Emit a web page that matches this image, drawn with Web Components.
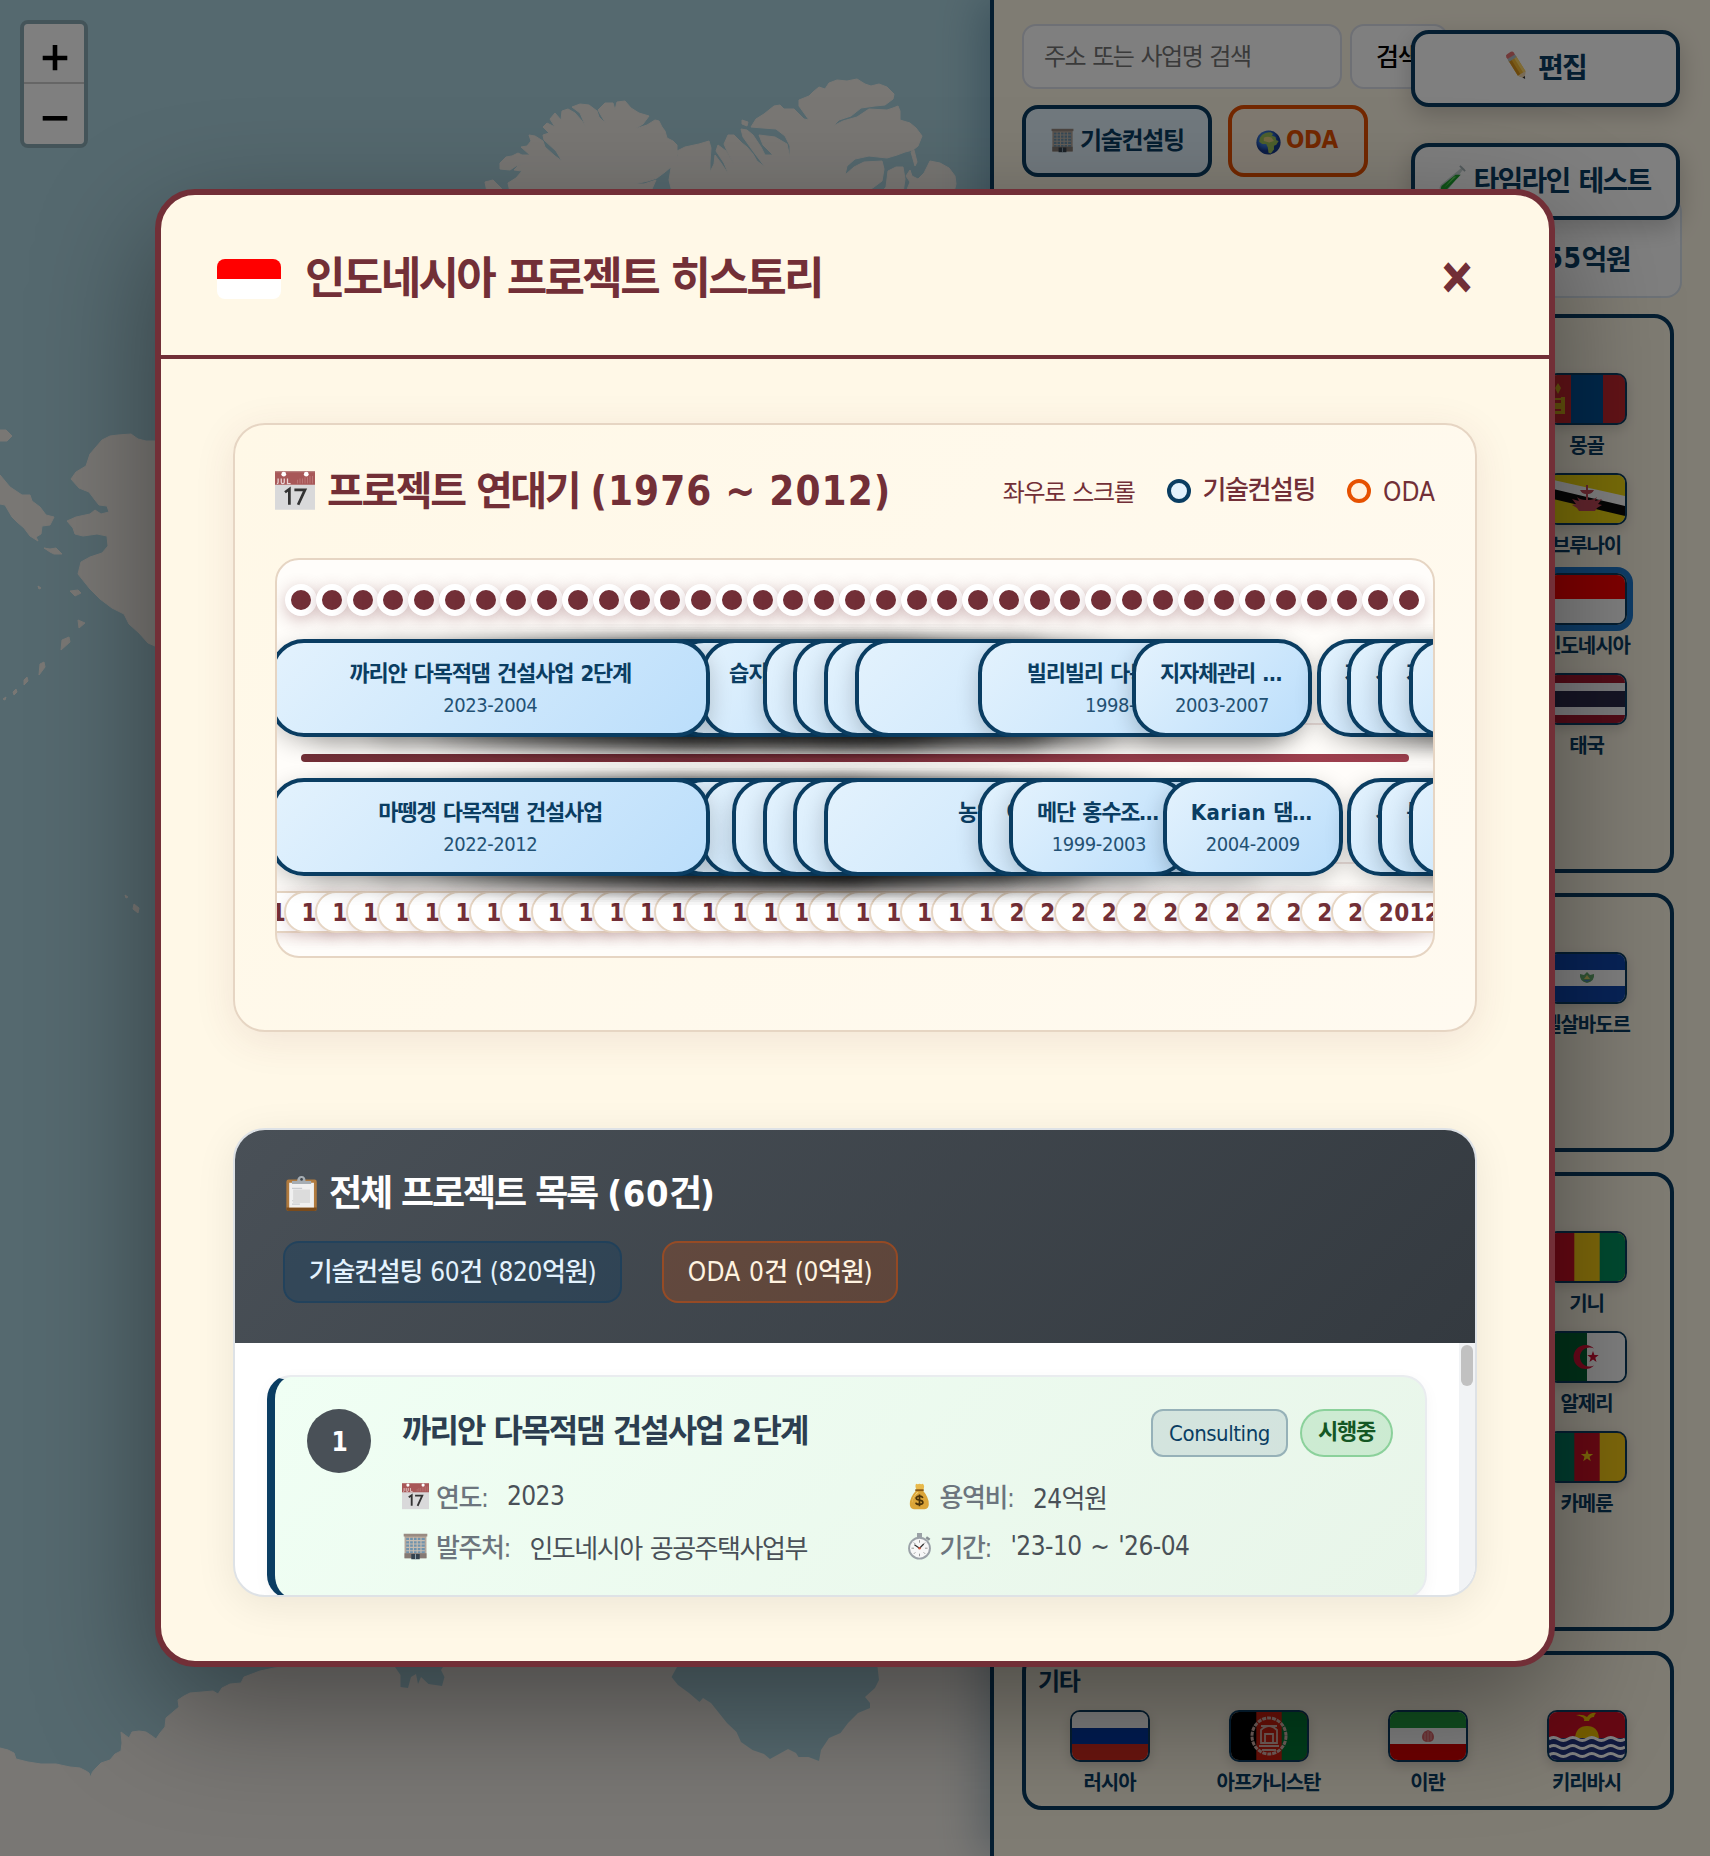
<!DOCTYPE html>
<html lang="ko">
<head>
<meta charset="utf-8">
<title>프로젝트 히스토리</title>
<style>
html,body{margin:0;height:1856px;overflow:hidden}
body{font-family:"DejaVu Sans Condensed","Noto Sans CJK KR",sans-serif;color:#0a3d62}
</style>
</head>
<body>
<project-app></project-app>
<script>
const BASE = `<style>
*{box-sizing:border-box;letter-spacing:-.055em;word-spacing:.07em}
:host{display:block;box-sizing:border-box}
h1,h2,h4{letter-spacing:-.06em;word-spacing:.03em}
.l{letter-spacing:-.027em;word-spacing:.03em;font-style:normal}
.b .l,.b.l{letter-spacing:.018em;word-spacing:-.02em}
</style>`;
const define = (name, html) => {
  customElements.define(name, class extends HTMLElement {
    constructor() {
      super();
      const root = this.attachShadow({ mode: 'open' });
      const t = document.createElement('template');
      t.innerHTML = BASE + (typeof html === 'function' ? '' : html);
      root.append(t.content.cloneNode(true));
    }
    connectedCallback() {
      if (typeof html === 'function' && !this.done) {
        this.done = true;
        const t = document.createElement('template');
        t.innerHTML = html(this);
        this.shadowRoot.append(t.content.cloneNode(true));
      }
    }
  });
};

/* ---------- pictograms ---------- */
const ICONS = {
  calendar: `<rect x="0" y="1" width="32" height="30" fill="#d9d9da"/><path d="M0 0h32v11H0z" fill="#a85858"/><path d="M0 0h32v1H0z" fill="#b98280"/><circle cx="7" cy="2.500" r="1.900" fill="#fff"/><circle cx="25" cy="2.500" r="1.900" fill="#fff"/><path d="M2.500 6v3q0 1-1 1M5 6v3q0 1 1.200 1t1.200-1V6M10 6v4h2.500" stroke="#ead5d5" stroke-width="1" fill="none"/><path d="M18 7v3M20 6v4M22 6v4M24 5v5M26 5v5M28 4v6M30 4v6" stroke="#c07f7f" stroke-width=".6"/><path d="M8 17l3.500-2.500V27M15.500 15H24l-5.500 12" stroke="#333" stroke-width="2.200" fill="none"/>`,
  pencil: `<g transform="rotate(-32 16 16)"><path d="M11 5h10v21l-5 6.500-5-6.500z" fill="#f2b632"/><path d="M11 6h3.300v20H11z" fill="#d7901a"/><path d="M18 6h3v20h-3z" fill="#ffd768"/><path d="M11 26h10l-5 7z" fill="#f3d9b1"/><path d="M14.400 30.500h3.200L16 33.500z" fill="#333"/><path d="M11 3h10v4H11z" fill="#aebcc4"/><path d="M11 3.500V1q0-2.500 2.500-2.500h5q2.500 0 2.500 2.500v2.500z" fill="#e57373"/></g>`,
  building: `<path d="M3 2h26v28H3z" fill="#b4a79b"/><path d="M2 1h28v3H2z" fill="#998b82"/><path d="M5 6h22v18H5z" fill="#6f93ad"/><path d="M9 5v19M13.500 5v19M18 5v19M22.500 5v19M5 9h22M5 13h22M5 17h22M5 21h22" stroke="#c7bcb0" stroke-width="1.300"/><path d="M3 24h26v6H3z" fill="#857a74"/><path d="M11 25h10v6H11z" fill="#35434f"/><path d="M16 25v6" stroke="#9fb3c0"/>`,
  globe: `<defs><radialGradient id="g" cx=".4" cy=".35"><stop offset="0" stop-color="#6fb4ef"/><stop offset=".7" stop-color="#2a62c4"/><stop offset="1" stop-color="#173a8c"/></radialGradient></defs><circle cx="16" cy="16" r="15.500" fill="url(#g)"/><path d="M8 6q5-4 11-3l3 2-2 2 5 2 1 4 3 1-3 5-3 1v5l-4 5-3-1-1-7-2-4-5 0-4-3 1-5z" fill="#9cc05a"/><path d="M10 10q5-3 10 0l3 4-6 2-7-2z" fill="#e4cf83"/>`,
  tube: `<path d="M27 1l4 4-3 1L11 29q-4 4-8 1-3-4 1-8L26 4z" fill="#c9d6d6"/><path d="M20 11l6 0L10 28q-3 3-6 1-2-3 1-6z" fill="#1fa52f"/><path d="M18 13l3 0L7 26z" fill="#63dd62"/><path d="M25 1l6 6" stroke="#a9b7ba" stroke-width="2"/>`,
  clipboard: `<rect x="3" y="3" width="27" height="28" rx="2" fill="#b07a3e"/><path d="M3 28h27v1.500q0 1.500-2 1.500H5q-2 0-2-1.500z" fill="#7a4b1c"/><rect x="5.500" y="6" width="22" height="22" fill="#f0f0f0"/><path d="M8 11h9M8 25h7M8 22h16" stroke="#c9ccd0" stroke-width="1"/><path d="M9 12h15v12H9z" fill="#dcdcdc"/><path d="M8 7V4.500h4.500Q13 0 16.500 0T20 4.500h5V7z" fill="#a6adb3"/><circle cx="16.500" cy="3" r="1.200" fill="#3f464d"/>`,
  money: `<path d="M13 9q-3-5-1-8 2 1 4 0 2 1 4 0 3 3 0 8z" fill="#e8b94a"/><path d="M12 9h8q7 8 7 16 0 6-5 6H9.500q-5 0-5-6 0-8 7.500-16z" fill="#dba539"/><path d="M13 11q-6 7-6 13 1-8 8-13z" fill="#f6da83"/><path d="M11 8.500h10" stroke="#8a5a14" stroke-width="2.200"/><path d="M20 17.500q-1-2-4-2t-4 2.200q0 2 4 2.600t4 2.800q0 2.300-4 2.300t-4.300-2.200M16 13.500v14" stroke="#4a3208" stroke-width="2" fill="none"/>`,
  watch: `<path d="M13 0h6v5h-6z" fill="#9aa1a6"/><path d="M24 5l4 3" stroke="#8a9196" stroke-width="3"/><circle cx="16" cy="18" r="13.500" fill="#9ba2a8"/><circle cx="16" cy="18" r="11.200" fill="#f7f7f7"/><path d="M16 8.500v3M16 24.500v3M6.500 18h3M22.500 18h3M9.300 11.300l1.800 1.800M22.700 11.300l-1.800 1.800M9.300 24.700l1.800-1.800M22.700 24.700l-1.800-1.800" stroke="#888"/><path d="M16 18l5-5M16 18l-6-4" stroke="#333" stroke-width="1.500"/><circle cx="16" cy="18" r="1.500" fill="#d0553e"/>`
};
define('picto-icon', el => `<style>:host{display:inline-block;flex:none;width:var(--s,28px);height:var(--s,28px)}svg{display:block;width:100%;height:100%;overflow:visible}</style><svg viewBox="0 0 32 32" preserveAspectRatio="none">${ICONS[el.getAttribute('name')]}</svg>`);

/* ---------- flags (76 x 48) ---------- */
const v3 = (a, b, c, p = 25.3, q = 50.7) => `<path d="M0 0h76v48H0z" fill="${a}"/><path d="M${p} 0H76v48H${p}z" fill="${b}"/><path d="M${q} 0H76v48H${q}z" fill="${c}"/>`;
const h3 = (a, b, c) => `<path d="M0 0h76v17H0z" fill="${a}"/><path d="M0 16h76v16H0z" fill="${b}"/><path d="M0 32h76v16H0z" fill="${c}"/>`;
const star = (x, y, r) => { let d = ''; for (let i = 0; i < 10; i++) { const q = i % 2 ? r * .4 : r, a = Math.PI * (i / 5 - .5); d += (i ? 'L' : 'M') + (x + q * Math.cos(a)).toFixed(1) + ' ' + (y + q * Math.sin(a)).toFixed(1); } return d + 'z'; };
const FLAGS = {
  mn: v3('#c4272f', '#015197', '#c4272f', 22, 54) + `<path d="M3 22h3v17H3zM12 22h4v17h-4zM6 23h6v2H6zM6 36h6v3H6zM6 28h6v6H6zM9 8l3 5-3 6-3-6z" fill="#c9a41a"/>`,
  bn: `<path d="M0 0h76v48H0z" fill="#f0d810"/><path d="M0 4L76 21v12L0 14z" fill="#fff"/><path d="M0 13L76 31v10L0 23z" fill="#0a0a0a"/><path d="M37 10h2v5h6q-2 4-6 4v6q6 0 9-3l-2 4 7-2-4 5 4 1-5 3-2 3H30l-2-3-5-3 4-1-4-5 7 2-2-4q3 3 9 3v-6q-4 0-6-4h6z" fill="#c44a5a"/>`,
  id: `<path d="M0 0h76v24H0z" fill="#f00"/><path d="M0 24h76v24H0z" fill="#fff"/>`,
  th: `<path d="M0 0h76v48H0z" fill="#a51931"/><path d="M0 8h76v32H0z" fill="#f4f5f8"/><path d="M0 16h76v16H0z" fill="#2d2a4a"/>`,
  sv: h3('#0f47af', '#fff', '#0f47af') + `<path d="M31 20l4 1 3-3 3 3 4-1q1 7-7 9-8-2-7-9z" fill="#62a86a"/><path d="M35 25l3-4 3 4z" fill="#dcd06a"/><path d="M34 26h8l-4 2z" fill="#4a86c0"/>`,
  gn: v3('#ce1126', '#fcd116', '#009460'),
  dz: `<path d="M0 0h38v48H0z" fill="#006233"/><path d="M38 0h38v48H38z" fill="#fff"/><path d="M45 15.500a12 12 0 1 0 0 17 9.600 9.600 0 1 1 0-17z" fill="#d21034"/><path d="${star(44, 24, 6)}" fill="#d21034"/>`,
  cm: v3('#007a5e', '#ce1126', '#fcd116') + `<path d="${star(38, 23, 6.5)}" fill="#fcd116"/>`,
  ru: h3('#fff', '#0039a6', '#d52b1e'),
  af: v3('#000', '#d32011', '#007a36') + `<g fill="none" stroke="#e0bdb4"><ellipse cx="38" cy="24" rx="17" ry="18" stroke-width="3" stroke-dasharray="4 1"/><path d="M30 18q8-8 16 0v13H30zM34 31V22h8v9M28 34h20M31 38h14M30 14h16" stroke-width="1.800"/></g>`,
  ir: h3('#239f40', '#fff', '#da0000') + `<path d="M38 18q6 2 6 7t-6 5q-6 0-6-5t6-7z" fill="#e0666a"/><path d="M38 19v11M35 21v7M41 21v7" stroke="#f3b6b6" stroke-width=".8"/>`,
  ki: `<path d="M0 0h76v26H0z" fill="#ce1126"/><path d="M26 26q1-12 12-12t12 12z" fill="#e8b800"/><path d="M27 3q7-1 11 2 4-5 9-4-2 2-2 4-4 0-5 4h-5q2-4-8-6z" fill="#e8b800"/><path d="M0 26h76v22H0z" fill="#23357e"/><g fill="none" stroke="#fff" stroke-width="3"><path d="M0 27q4.700-3 9.500 0t9.500 0 9.500 0 9.500 0 9.500 0 9.500 0 9.500 0 9.500 0"/><path d="M0 35q4.700-3 9.500 0t9.500 0 9.500 0 9.500 0 9.500 0 9.500 0 9.500 0 9.500 0"/><path d="M0 43q4.700-3 9.500 0t9.500 0 9.500 0 9.500 0 9.500 0 9.500 0 9.500 0 9.500 0"/></g>`
};
define('flag-tile', el => `<style>
:host{display:flex;flex-direction:column;align-items:center;gap:8px;height:84px;min-width:0}
.f{width:80px;height:52px;border:2px solid #0a3d62;border-radius:10px;overflow:hidden;box-shadow:0 4px 12px rgba(0,0,0,.15)}
.f.on{box-shadow:0 0 0 6px #1c78cc}
svg{display:block;width:76px;height:48px}
span{font-size:20px;line-height:24px;font-weight:700;white-space:nowrap;transform:translateY(1px)}
</style><div class="f${el.hasAttribute('selected') ? ' on' : ''}"><svg viewBox="0 0 76 48" preserveAspectRatio="none">${FLAGS[el.getAttribute('code')]}</svg></div><span><slot></slot></span>`);

define('region-card', el => `<style>
:host{border:4px solid #0a3d62;border-radius:20px;padding:0 12px 12px}
h3{margin:0;height:55px;padding-top:12px;font-size:24px;line-height:31px;font-weight:700}
.g{display:grid;grid-template-columns:repeat(4,1fr);grid-template-rows:repeat(${el.getAttribute('rows')},84px);gap:16px}
</style><h3>${el.getAttribute('label') || ''}</h3><div class="g"><slot></slot></div>`);

/* ---------- map ---------- */
define('zoom-control', `<style>
:host{width:68px;border:4px solid rgba(0,0,0,.2);border-radius:8px;background-clip:padding-box}
button{display:flex;align-items:center;justify-content:center;width:60px;height:60px;border:0;padding:10px 0 0 2px;background:#fff;background-clip:padding-box}
.i{border-bottom:2px solid #ccc;border-radius:4px 4px 0 0}.o{border-radius:0 0 4px 4px;padding-top:8px}
svg{display:block}
</style><button class="i" aria-label="확대"><svg width="26" height="26" viewBox="0 0 26 26"><path d="M10.700 0h4.600v10.700h10v4.600h-10v10h-4.600v-10H.700v-4.600h10z"/></svg></button><button class="o" aria-label="축소"><svg width="26" height="5" viewBox="0 0 26 5"><path d="M.700 0h24.600v4.600H.700z"/></svg></button>`);

define('map-view', `<style>
:host{position:relative;background:#aad3df;overflow:hidden}
svg{position:absolute;inset:0;width:100%;height:100%}
zoom-control{position:absolute;left:20px;top:20px}
</style>
<svg viewBox="0 0 990 1856">
<g fill="#f2efe9" stroke="#f2efe9" stroke-width="1" stroke-linejoin="round">
<path d="M485 182l8-2 8 8 3 4h-17zM510 192l-2-9 8-5 6-7-8-1 4-4 8-3-10 3-6 4-10-1 0-6 6-6 6-1 6-3 4 2 8 0-9-8 6-1 4-5-2-6 6 1 8 5 2 6 10 9 7 5-6-10-12-11-1-5 6-2-6-6 4-4 8 4-5-8 5-6 6 7 1-9 6-2 7 4 7 8 4 6-6-14-8-6 8-3 9 1 8 6 2 6 7 7-8-14 7-7 8 0 2 7 2-8 8-1 6 7 8 5 10 3-6 8-8 5 12-4 8-5 4 1 3 6 3 4 2 7 6 3 4 4 0 12-6 10-6 5-8 6-9 3-14 3 10 0 12-4-4 9-10 8z"/>
<path d="M672 192l-3-12 2-12-1-6 8-6-1-5 8-4 14-3 10-3 2 7-1 14 0 10 4-8 1-9 6 8 8 12-5-12-8-12 2-6 8 6 4 7 4 6-7-13-3-7 4-9 6 0 8 8 5 4 6 7 4 7 8 6-12-16-10-14-2-8 6 1 6 5 8 12 4 8 8 0-10-10-4-10 16 2 12 7 3 14 0-12-5-10-9-7-13-1-12-1 5-8 8-5 10-8 6-1 4 4 10 0 10 10 5 1-10-14 0-6 10-4 4-4 6-5 6 2 4-6 8-3 10 1 10-2 8 5 6 2 8-2 8 3 7 7-1 5-8 6-10 1-14 2-10 8-12 4-6 6 10-5 14-4 12-8 18 1 6-2 5-2 2 5 0 9 10 3 6 5 6 8-4 10-5 4-8 2-8 3-10 3-18-2-14 3-8 7-2 9 9-8 10-5 18-1 2 8-2 12-8 6-6 4 4 6 8-3 6-7 2-16 8-4 7 0 2 12-2 14-5 8zM906 192l4-10-4-6 4-6 2 6 6 3 6-6 6-12 10 2 9 5 6 8 1 8-2 8zM911 152l3-2 3 12-2 4zM742 120l6 2-1 4-5-2z"/>
<path d="M0 430l6 0 6 6-5 5-7 0zM0 475l10 12 12 8 8 0 2 6 8 6 6 8 8 2-4 8-8 1-1 8-5 3 2 4-8-5-6-8-7-6-5-5-7-12-5-1zM44 548l6 1 6-1 6 6-8 0-4-2zM38 586l3 2-2 1z"/>
<path d="M131 434l7 5 8 2 16 0v208l-14-6-9-10-10-9-5-10-12-6-12-9-10-10-12-15 3-12 9-5 12-4 6-7-1-10-10-2-14 2-8-2-2-6-6-7 9-4 14-3 5-4 6 4 8-2-2-6-8-1-4-5-6-8-10-4-8-9 5-7 10-6 4-12 12-14 8-4 8-1z"/>
<path d="M70 591l8-1 3 3-6 3zM78 620l7 3-6 5zM62 640l7-3 1 5-9 8zM40 664l4-2 1 5-6 8zM24 680l3-3 1 4-4 4zM13 692l3-3 1 3-3 3zM3 699l3-2-1 3zM134 904l5 4-1 5-5-4zM125 895l3 2-2 1z"/>
<path d="M0 1748l8 2 6 3 2 6 12 3 13 2 15 0 14 3 10 1 6 3 3 2 1.500 4 2-5 3.500-4 5-5 9-3 5-6 6-3 1-8-1-11 4 3 4 3 3-6 7-1 7 1 6 4 4 3 4-6 5-6 1-9 7-6 6-5-1-7 6-4 6-3 12-1 11-1 5 3 4-6 8-4 11-1 3-6 8-3 8-3 14-3 18-2H990v200H0z"/>
</g>
<g fill="#aad3df">
<path d="M677 1660v7l-5.500 10 6.500 8 11 8 10.500 9 3.500-4 8 5 8 10 8 10 9.500 9 4.500 10 11.500 8 11.500 4 6 5 9-5 9-5 8 4 2.500 4 10 0 10.500 4 2-11 8-12 11.500-5 7.500-10 10-10 12-5 0-5-5-6 10-9 4-8-1.500-13v-7z"/>
<path d="M395 1660v7l5.500 8v12l7.500 1 3-11 5-3 2 10 3-7 7.500 7 13.500 2 2.500-9-3.500-7 2-3v-7z"/>
</g>
</svg><zoom-control></zoom-control>`);

/* ---------- side panel ---------- */
define('side-panel', `<style>
:host{position:relative;background:#fff8e7;border-left:4px solid #0a3d62;box-shadow:-8px 0 40px rgba(10,61,98,.3);padding:24px 28px 0 28px}
.row{display:flex}
.search{gap:8px;height:65px}
.in,.btn{border:2px solid #dde1ea;border-radius:14px;background:#fff;font-size:24px;display:flex;align-items:center}
.in{width:320px;padding:0 0 4px 20px;color:#757575;letter-spacing:-.062em}.btn{width:98px;padding:0 0 4px 24px;font-size:25px;color:#000;font-weight:500}
.tg{gap:16px;margin-top:16px}
.t{display:flex;align-items:center;gap:5px;height:72px;border:4px solid #0a3d62;border-radius:16px;background:#e3f2fd;font-size:24px;font-weight:700;padding:0 24px 5px;width:190px;white-space:nowrap}
.t picto-icon{--s:25px;margin-top:4px}
.t.o{border-color:#e65100;background:#fff3e0;color:#e65100;width:140px;padding-bottom:2px}.t.o span{letter-spacing:-.015em}
.stat{display:flex;justify-content:flex-end;align-items:center;margin:19px -8px 0 0;height:102px;width:660px;border:2px solid #dbe4ee;border-radius:16px;background:#fff;font-size:28px;font-weight:700;padding:22px 50px 0 0}
.cards{display:flex;flex-direction:column;gap:20px;margin-top:16px;width:652px}
flag-tile{grid-column:4}flag-tile.a{grid-column:auto}
.float{position:absolute;right:30px;width:269px;height:77px;border:4px solid #0a3d62;border-radius:18px;background:#fff;box-shadow:0 8px 24px rgba(0,0,0,.2);display:flex;align-items:center;justify-content:center;gap:7px;font-size:28px;font-weight:600;padding:0 2px 5px 0;white-space:nowrap;letter-spacing:-.062em}
</style>
<div class="row search"><div class="in">주소 또는 사업명 검색</div><div class="btn">검색</div></div>
<div class="row tg"><div class="t"><picto-icon name="building"></picto-icon><span>기술컨설팅</span></div><div class="t o"><picto-icon name="globe"></picto-icon><span>ODA</span></div></div>
<div class="stat b"><span class="l">55</span>억원</div>
<div class="cards">
<region-card rows="5"><flag-tile code="mn">몽골</flag-tile><flag-tile code="bn">브루나이</flag-tile><flag-tile code="id" selected>인도네시아</flag-tile><flag-tile code="th">태국</flag-tile></region-card>
<region-card rows="2"><flag-tile code="sv">엘살바도르</flag-tile></region-card>
<region-card rows="4"><flag-tile code="gn">기니</flag-tile><flag-tile code="dz">알제리</flag-tile><flag-tile code="cm">카메룬</flag-tile></region-card>
<region-card rows="1" label="기타"><flag-tile class="a" code="ru">러시아</flag-tile><flag-tile class="a" code="af">아프가니스탄</flag-tile><flag-tile class="a" code="ir">이란</flag-tile><flag-tile class="a" code="ki">키리바시</flag-tile></region-card>
</div>
<div class="float" style="top:30px"><picto-icon name="pencil"></picto-icon>편집</div>
<div class="float" style="top:143px"><picto-icon name="tube"></picto-icon>타임라인 테스트</div>`);

/* ---------- timeline ---------- */
const STEP = 1108 / 36;
define('time-card', el => `<style>
:host{position:absolute;height:98px;border:4px solid #0a3d62;border-radius:34px;background:linear-gradient(135deg,#e3f2fd,#bbdefb);box-shadow:0 7px 22px rgba(0,0,0,.2);padding:15px 24px 0;text-align:center;color:#0a3d62}
div{white-space:nowrap;overflow:hidden;text-overflow:ellipsis}
.n{font-size:22px;line-height:32px;font-weight:700}
.d{font-size:20px;line-height:28px;margin-top:1px;opacity:.88;letter-spacing:-.022em}
</style><div class="n b"><slot></slot></div><div class="d">${el.getAttribute('range') || ''}</div>`);

define('timeline-chart', () => {
  const L = k => (24 + k * STEP).toFixed(2);
  let h = `<style>
:host{position:relative;height:400px;border:2px solid #e6d5c3;border-radius:24px;background:#fffdfa;overflow:hidden}
i{position:absolute;width:32px;height:32px;margin-left:-16px;top:24px;border:6px solid #fff;border-radius:50%;background:#722f37;box-shadow:0 4px 16px rgba(114,47,55,.3)}
.axis{position:absolute;left:24px;right:24px;top:194px;height:8px;border-radius:4px;background:linear-gradient(90deg,#722f37,#a0404f)}
.y{position:absolute;top:331px;width:96px;margin-left:-47.500px;height:42px;border:2px solid #e6d5c3;border-radius:24px;background:#fff;box-shadow:0 4px 14px rgba(114,47,55,.15);color:#722f37;font-size:24px;line-height:40px;font-weight:700;text-align:center;letter-spacing:.014em}
.g{position:absolute;left:0;right:0;height:2px;background:#ece0dc}
.u{top:79px}.w{top:218px}.top{z-index:3}
</style><div class="g" style="top:163px"></div><div class="g" style="top:302px"></div><div class="axis"></div>`;
  for (let k = 0; k < 37; k++) h += `<i style="left:${L(k)}px"></i><div class="y" style="left:${L(k)}px">${1976 + k}</div>`;
  const card = (row, k, w, text = '', range = '', cls = '') => `<time-card class="${row} ${cls}" style="left:${L(k)}px;width:${w}px" range="${range}">${text}</time-card>`;
  for (const k of [0, 2, 4, 5, 6, 7, 8, 9, 10, 11, 12]) h += card('u', k, 440) + card('w', k, 440);
  h += card('u', 13, 240, '습지개발 조사사업 2단계 시행') + card('u', 15, 300) + card('u', 16, 260) + card('u', 17, 300)
    + card('u', 18, 444, '반둥지역 홍수방어사업') + card('u', 22, 308, '빌리빌리 다목적댐 사업I', '1998-2007')
    + card('u', 27, 180, '지자체관리 관개사업', '2003-2007')
    + card('u', 33, 180, '자카르타 홍수방어 사업') + card('u', 34, 180, '사업관리 컨설팅 용역') + card('u', 35, 180, '자바지역 관개사업 조사') + card('u', 36, 180);
  h += card('w', 13, 180) + card('w', 14, 300) + card('w', 15, 260) + card('w', 16, 300)
    + card('w', 17, 446, '농업용수로 개발사업') + card('w', 22, 180, '이리안자야 농업개발 사업')
    + card('w', 23, 180, '메단 홍수조절 사업', '1999-2003') + card('w', 28, 180, '<span style="letter-spacing:.02em">Karian</span> 댐건설사업', '2004-2009')
    + card('w', 34, 180, '사업관리 컨설팅 용역') + card('w', 35, 180, '북부 수자원 개발사업') + card('w', 36, 180);
  h += card('u', -1, 440, '까리안 다목적댐 건설사업 2단계', '2023-2004', 'top') + card('w', -1, 440, '마뗑겡 다목적댐 건설사업', '2022-2012', 'top');
  return h;
});

define('timeline-panel', `<style>
:host{height:609px;border:2px solid #e6d5c3;border-radius:32px;padding:40px;background:linear-gradient(135deg,#fff8e7,#fffaf0);box-shadow:0 8px 40px rgba(114,47,55,.1);color:#722f37}
.h{display:flex;align-items:center;height:56px;margin-top:-2px;margin-bottom:39px;white-space:nowrap}
picto-icon{--s:40px;margin-right:12px}
h2{margin:0 auto 0 0;font-size:40px;line-height:56px;font-weight:700}
h2 .l{letter-spacing:.027em!important}
.s{font-size:24px;margin:-2px 32px 0 0}.k{display:flex;align-items:center;font-size:26px;font-weight:500;line-height:34px}
.k+.k{margin-left:32px}
.k span{margin-top:-2px}
u{width:24px;height:24px;border:4px solid #0a3d62;border-radius:50%;background:#e3f2fd;margin-right:12px}
u.o{border-color:#e65100;background:#fff3e0}
</style>
<div class="h"><picto-icon name="calendar"></picto-icon><h2 class="b">프로젝트 연대기 <span class="l">(1976 ~ 2012)</span></h2><span class="s">좌우로 스크롤</span><span class="k"><u></u><span>기술컨설팅</span></span><span class="k"><u class="o"></u><span style="letter-spacing:0;margin-top:1px">ODA</span></span></div>
<timeline-chart></timeline-chart>`);

/* ---------- list ---------- */
define('detail-row', el => `<style>
:host{display:flex;align-items:center;height:38px;font-size:26px;color:#495057;white-space:nowrap}
picto-icon{--s:27px;margin-right:7px}
b{font-weight:500;color:#6c757d;margin:-2px 18px 0 0}
</style><picto-icon name="${el.getAttribute('icon')}"></picto-icon><b>${el.getAttribute('label')}<span style="letter-spacing:0">:</span></b><span><slot></slot></span>`);

define('project-item', `<style>
:host{display:flex;gap:31px;height:224px;border:2px solid #e9ecef;border-left:8px solid #0a3d62;border-radius:24px;background:linear-gradient(135deg,#f0fff4,#e8f5e9);padding:32px;box-shadow:0 4px 16px rgba(0,0,0,.04)}
.no{flex:none;width:64px;height:64px;border-radius:50%;background:#495057;color:#fff;font-size:26px;font-weight:700;line-height:66px;text-align:center}
.m{flex:1;min-width:0}
.t{display:flex;align-items:center;height:48px;gap:12px;white-space:nowrap}
h4{margin:0 auto 0 0;font-size:32px;line-height:44px;font-weight:700;color:#2c3e50;margin-top:-5px}
.c,.s{height:48px;font-size:22px;line-height:45px;border:2px solid rgba(10,61,98,.3);border-radius:12px;background:rgba(10,61,98,.1);color:#0a3d62;width:137px;text-align:center;letter-spacing:-.02em}
.s{width:93px;border-radius:24px;border-color:rgba(40,167,69,.4);background:rgba(40,167,69,.15);color:#155724;font-weight:700;line-height:41px;letter-spacing:-.055em}
.g{display:grid;grid-template-columns:1fr 1fr;gap:12px 16px;margin-top:20px}
.n{letter-spacing:-.02em}
</style>
<div class="no">1</div><div class="m"><div class="t"><h4 class="b">까리안 다목적댐 건설사업 <span class="l">2</span>단계</h4><span class="c">Consulting</span><span class="s">시행중</span></div>
<div class="g"><detail-row icon="calendar" label="연도"><span class="n">2023</span></detail-row><detail-row icon="money" label="용역비"><span class="n">24</span>억원</detail-row><detail-row icon="building" label="발주처">인도네시아 공공주택사업부</detail-row><detail-row icon="watch" label="기간"><span class="n">'23-10 ~ '26-04</span></detail-row></div></div>`);

define('project-list', `<style>
:host{height:469px;border:2px solid #dee2e6;border-radius:32px;overflow:hidden;background:#fff;box-shadow:0 8px 40px rgba(0,0,0,.08)}
header{height:213px;padding:37px 48px 0;background:linear-gradient(135deg,#495057,#343a40);color:#fff}
.h{display:flex;align-items:center;height:54px;white-space:nowrap}
picto-icon{--s:36px;margin-right:10px}
h2{margin:0;font-size:36px;line-height:54px;font-weight:700}
.r{display:flex;gap:40px;margin-top:20px}
.p{height:62px;border:2px solid rgba(10,61,98,.4);border-radius:16px;background:rgba(10,61,98,.3);color:#e3f2fd;font-size:26px;line-height:59px;text-align:center;width:339px;font-weight:500;white-space:nowrap;letter-spacing:-.048em}
.p .l{letter-spacing:-.015em}
.p.o{width:236px;border-color:rgba(230,81,0,.4);background:rgba(230,81,0,.2);color:#fff3e0}
.v{display:flex;height:252px;overflow:hidden}
project-item{flex:none;width:1160px;margin:32px 32px 0}
.sb{width:16px;background:#f1f3f5;padding:2px}.sb div{height:41px;border-radius:6px;background:#c1c1c1}
</style>
<header><div class="h"><picto-icon name="clipboard"></picto-icon><h2 class="b">전체 프로젝트 목록 <span class="l">(60</span>건<span class="l">)</span></h2></div>
<div class="r"><div class="p">기술컨설팅 <span class="l">60</span>건 <span class="l">(820</span>억원<span class="l">)</span></div><div class="p o"><span class="l" style="letter-spacing:.01em">ODA 0</span>건 <span class="l">(0</span>억원<span class="l">)</span></div></div></header>
<div class="v"><project-item></project-item><div class="sb"><div></div></div></div>`);

define('history-modal', `<style>
:host{width:1400px;height:1478px;border:6px solid #722f37;border-radius:40px;background:#fff8e7;box-shadow:0 40px 120px rgba(0,0,0,.4);overflow:hidden;color:#722f37}
header{display:flex;align-items:center;height:164px;border-bottom:4px solid #722f37;padding:7px 76px 0 56px}
svg.f{width:64px;height:40px;border-radius:8px;margin-right:24px}
h1{margin:0 auto 0 0;font-size:44px;line-height:60px;font-weight:700}
.x{font-size:46px;line-height:50px;font-weight:700;letter-spacing:0;width:32px;display:flex;justify-content:center;-webkit-text-stroke:2px #722f37;margin-top:-5px}
main{padding:64px 72px;display:flex;flex-direction:column;gap:96px}
</style>
<header><svg class="f" viewBox="0 0 64 40"><path d="M0 0h64v20H0z" fill="#f00"/><path d="M0 20h64v20H0z" fill="#fff"/></svg><h1>인도네시아 프로젝트 히스토리</h1><span class="x">×</span></header>
<main><timeline-panel></timeline-panel><project-list></project-list></main>`);

define('project-app', `<style>
:host{position:relative;display:grid;grid-template-columns:990px 720px;width:1710px;height:1856px;overflow:hidden}
.ov{position:absolute;inset:0;display:flex;align-items:center;justify-content:center;background:rgba(0,0,0,.5);z-index:5}
</style><map-view></map-view><side-panel></side-panel><div class="ov"><history-modal></history-modal></div>`);
</script>
</body>
</html>
